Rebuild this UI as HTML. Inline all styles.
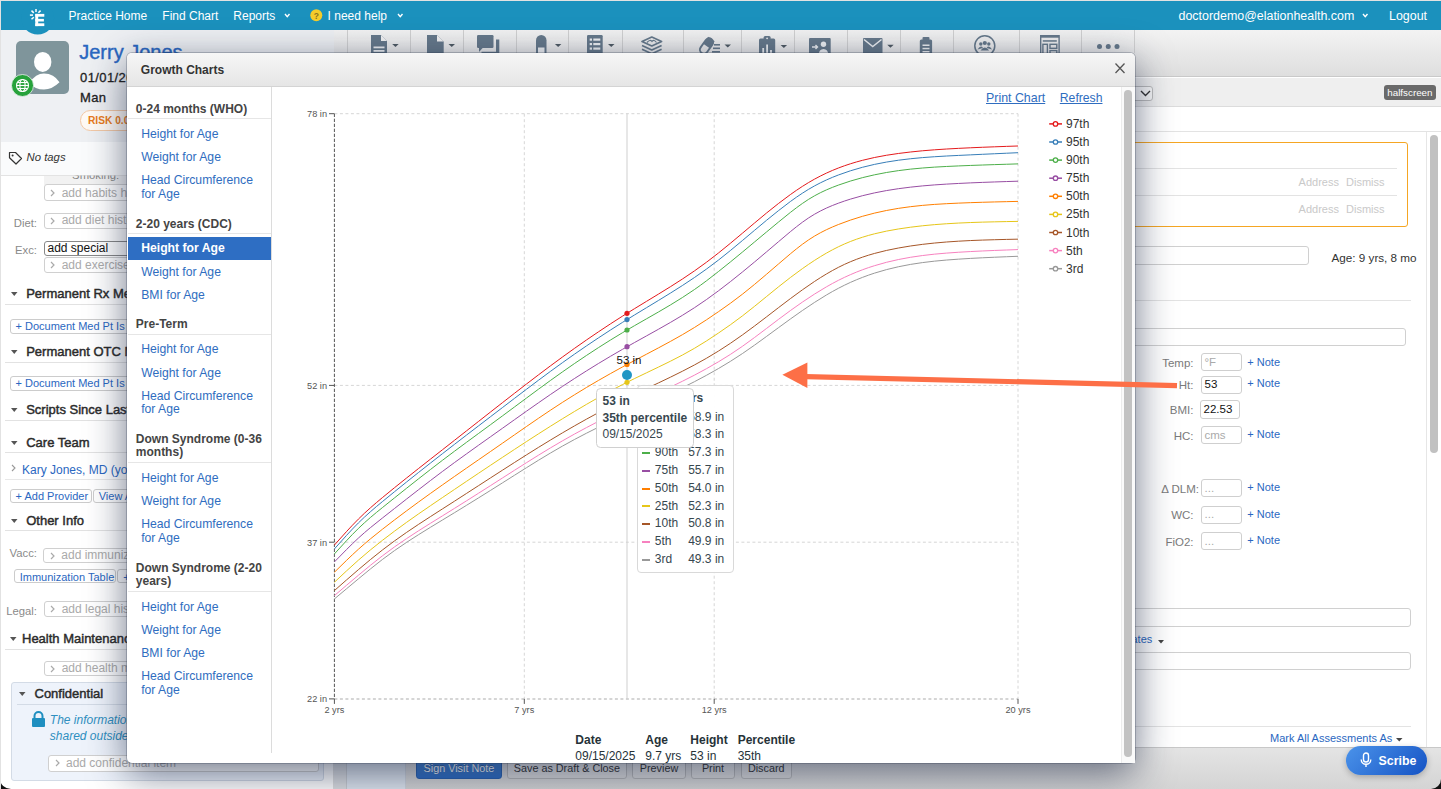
<!DOCTYPE html>
<html><head><meta charset="utf-8"><style>
*{margin:0;padding:0;box-sizing:border-box}
html,body{width:1441px;height:789px;overflow:hidden;background:#fff;font-family:"Liberation Sans",sans-serif}
.t{position:absolute;line-height:1;white-space:nowrap}
.r{position:absolute}
svg.r{overflow:visible}
</style></head><body>
<div class="r" style="left:0.0px;top:0.0px;width:1441.0px;height:30.0px;background:#1b91bd;"></div>
<div class="t " style="left:68.5px;top:10.1px;font-size:12px;color:#fff;">Practice Home</div>
<div class="t " style="left:162.3px;top:10.1px;font-size:12px;color:#fff;">Find Chart</div>
<div class="t " style="left:233.3px;top:10.1px;font-size:12px;color:#fff;">Reports</div>
<svg class="r" style="left:284px;top:13px" width="6.5" height="4.6"><polyline points="1,1 3.25,3.6 5.5,1" fill="none" stroke="#fff" stroke-width="1.4"/></svg>
<svg class="r" style="left:310px;top:9px" width="13" height="13"><circle cx="6.3" cy="6.3" r="6" fill="#f4cc2a"/><text x="6.3" y="9.8" text-anchor="middle" font-family="Liberation Sans" font-weight="bold" font-size="8.5" fill="#8a7420">?</text></svg>
<div class="t " style="left:327.6px;top:10.1px;font-size:12px;color:#fff;">I need help</div>
<svg class="r" style="left:397px;top:13px" width="6.5" height="4.6"><polyline points="1,1 3.25,3.6 5.5,1" fill="none" stroke="#fff" stroke-width="1.4"/></svg>
<div class="t " style="left:1178.5px;top:9.8px;font-size:12.45px;color:#fff;">doctordemo@elationhealth.com</div>
<svg class="r" style="left:1362px;top:13px" width="6.5" height="4.6"><polyline points="1,1 3.25,3.6 5.5,1" fill="none" stroke="#fff" stroke-width="1.4"/></svg>
<div class="t " style="left:1389.0px;top:9.8px;font-size:12.45px;color:#fff;">Logout</div>
<div class="r" style="left:0.0px;top:30.0px;width:347.0px;height:112.0px;background:#eef0f3;"></div>
<svg class="r" style="left:0px;top:0px" width="60" height="40"><circle cx="37.7" cy="18.1" r="16.4" fill="#1b91bd"/></svg>
<svg class="r" style="left:0;top:0" width="60" height="40">
<g fill="#fff"><rect x="35.3" y="13.9" width="2.9" height="12.2"/><rect x="35.3" y="13.9" width="9" height="2.8"/><rect x="35.3" y="18.9" width="8.6" height="2.6"/><rect x="35.3" y="23.3" width="9" height="2.8"/></g>
<g stroke="#fff" stroke-width="1.5" stroke-linecap="butt"><line x1="36" y1="9" x2="36" y2="12"/><line x1="38.4" y1="12.8" x2="40.6" y2="10.6"/><line x1="31.5" y1="10.6" x2="33.8" y2="12.9"/><line x1="29.9" y1="15.1" x2="33" y2="15.1"/><line x1="31.5" y1="19.3" x2="33.8" y2="17.2"/></g></svg>
<div class="r" style="left:16.0px;top:41.0px;width:53.0px;height:53.0px;background:#7f959b;border-radius:5px;overflow:hidden;"></div>
<svg class="r" style="left:16px;top:41px" width="53" height="53"><ellipse cx="26.7" cy="20.9" rx="8.7" ry="10" fill="#fff"/><path d="M13.3,42 Q20,32.5 28,32.6 Q38,32.7 43.5,41.3 Q36,48.6 28,48.6 Q19,48.6 13.3,42 Z" fill="#fff"/></svg>
<svg class="r" style="left:11px;top:74px" width="23" height="23"><circle cx="11.5" cy="11.5" r="11" fill="#27a23b" stroke="#eef0f3" stroke-width="0.8"/><g fill="none" stroke="#fff" stroke-width="1.1"><circle cx="11.5" cy="11.5" r="6"/><ellipse cx="11.5" cy="11.5" rx="2.6" ry="6"/><line x1="5.5" y1="11.5" x2="17.5" y2="11.5"/><line x1="6.3" y1="8.5" x2="16.7" y2="8.5"/><line x1="6.3" y1="14.5" x2="16.7" y2="14.5"/></g></svg>
<div class="t " style="left:79.2px;top:41.7px;font-size:20px;color:#2a67c1;-webkit-text-stroke:0.4px #2a67c1;">Jerry Jones</div>
<div class="t " style="left:80.0px;top:70.5px;font-size:13px;color:#222;-webkit-text-stroke:0.3px #222;letter-spacing:0.4px;">01/01/2016</div>
<div class="t " style="left:80.0px;top:90.8px;font-size:13px;color:#222;-webkit-text-stroke:0.3px #222;letter-spacing:0.4px;">Man</div>
<div class="r" style="left:80.0px;top:110.2px;width:120.0px;height:20.6px;border:1px solid #f3c9a6;border-radius:10.3px;background:#fffaf5;"></div>
<div class="t " style="left:88.0px;top:116.2px;font-size:10.2px;color:#e87a20;font-weight:bold;">RISK 0.08</div>
<div class="r" style="left:0.0px;top:142.0px;width:347.0px;height:34.0px;background:#fafbfc;border-bottom:1px solid #e3e3e3;"></div>
<svg class="r" style="left:8px;top:151px" width="15" height="15"><path d="M1.5,1.5 L7.5,1.5 L13.5,7.5 L8,13 L1.5,6.8 Z" fill="none" stroke="#333" stroke-width="1.2" stroke-linejoin="round"/><circle cx="4.6" cy="4.6" r="1" fill="#333"/></svg>
<div class="t " style="left:26.6px;top:152.4px;font-size:11.3px;color:#333;font-style:italic;">No tags</div>
<div class="r" style="left:44.0px;top:176.0px;width:290.0px;height:8.5px;background:#f2f2f2;"></div>
<div class="t " style="left:119.2px;transform:translateX(-100%);top:170.0px;font-size:11.3px;color:#888;clip-path:inset(5.6px 0 0 0);">Smoking:</div>
<div class="r" style="left:43.7px;top:184.4px;width:300.0px;height:16.4px;border:1px solid #d0d0d0;border-radius:3px;background:#fff;box-sizing:border-box;"></div>
<svg class="r" style="left:50.2px;top:188.6px" width="6" height="8"><polyline points="1,1 4,4 1,7" fill="none" stroke="#aaa" stroke-width="1.2"/></svg>
<div class="t " style="left:61.7px;top:187.0px;font-size:12px;color:#aaa;">add habits history</div>
<div class="t " style="left:37.0px;transform:translateX(-100%);top:217.9px;font-size:11.3px;color:#8a8a8a;">Diet:</div>
<div class="r" style="left:43.7px;top:212.7px;width:300.0px;height:16.2px;border:1px solid #d0d0d0;border-radius:3px;background:#fff;box-sizing:border-box;"></div>
<svg class="r" style="left:50.2px;top:216.79999999999998px" width="6" height="8"><polyline points="1,1 4,4 1,7" fill="none" stroke="#aaa" stroke-width="1.2"/></svg>
<div class="t " style="left:61.7px;top:214.4px;font-size:12px;color:#aaa;">add diet history</div>
<div class="t " style="left:37.0px;transform:translateX(-100%);top:244.9px;font-size:11.3px;color:#8a8a8a;">Exc:</div>
<div class="r" style="left:43.5px;top:240.6px;width:120.0px;height:15.0px;border:1px solid #888;border-radius:3px;background:#fff;"></div>
<div class="t " style="left:47.5px;top:241.8px;font-size:12px;color:#111;">add special</div>
<div class="r" style="left:43.7px;top:257.0px;width:300.0px;height:16.0px;border:1px solid #d0d0d0;border-radius:3px;background:#fff;box-sizing:border-box;"></div>
<svg class="r" style="left:50.2px;top:261.0px" width="6" height="8"><polyline points="1,1 4,4 1,7" fill="none" stroke="#aaa" stroke-width="1.2"/></svg>
<div class="t " style="left:61.7px;top:258.5px;font-size:12px;color:#aaa;">add exercise history</div>
<svg class="r" style="left:10.5px;top:292.2px" width="6.5" height="4"><polygon points="0,0 6.5,0 3.25,4" fill="#555"/></svg>
<div class="t " style="left:26.2px;top:287.2px;font-size:13px;color:#2b2b2b;-webkit-text-stroke:0.45px #2b2b2b;">Permanent Rx Meds</div>
<div class="r" style="left:5.0px;top:303.5px;width:328.0px;height:1.0px;background:#e2e2e2;"></div>
<div class="r" style="left:9.5px;top:318.7px;width:200.0px;height:15.0px;border:1px solid #ccc;border-radius:3px;background:#fff;"></div>
<div class="t " style="left:15.5px;top:321.0px;font-size:11px;color:#2a67c1;">+ Document Med Pt Is Taking</div>
<svg class="r" style="left:10.5px;top:350.4px" width="6.5" height="4"><polygon points="0,0 6.5,0 3.25,4" fill="#555"/></svg>
<div class="t " style="left:26.2px;top:345.4px;font-size:13px;color:#2b2b2b;-webkit-text-stroke:0.45px #2b2b2b;">Permanent OTC Meds</div>
<div class="r" style="left:5.0px;top:361.5px;width:328.0px;height:1.0px;background:#e2e2e2;"></div>
<div class="r" style="left:9.5px;top:375.8px;width:200.0px;height:15.0px;border:1px solid #ccc;border-radius:3px;background:#fff;"></div>
<div class="t " style="left:15.5px;top:378.1px;font-size:11px;color:#2a67c1;">+ Document Med Pt Is Taking</div>
<svg class="r" style="left:10.5px;top:407.8px" width="6.5" height="4"><polygon points="0,0 6.5,0 3.25,4" fill="#555"/></svg>
<div class="t " style="left:26.2px;top:402.8px;font-size:13px;color:#2b2b2b;-webkit-text-stroke:0.45px #2b2b2b;">Scripts Since Last Visit</div>
<div class="r" style="left:5.0px;top:419.5px;width:328.0px;height:1.0px;background:#e2e2e2;"></div>
<svg class="r" style="left:10.5px;top:440.6px" width="6.5" height="4"><polygon points="0,0 6.5,0 3.25,4" fill="#555"/></svg>
<div class="t " style="left:26.2px;top:435.6px;font-size:13px;color:#2b2b2b;-webkit-text-stroke:0.45px #2b2b2b;">Care Team</div>
<div class="r" style="left:5.0px;top:452.1px;width:328.0px;height:1.0px;background:#e2e2e2;"></div>
<svg class="r" style="left:11px;top:464px" width="6" height="8"><polyline points="1,1 4,4 1,7" fill="none" stroke="#999" stroke-width="1.1"/></svg>
<div class="t " style="left:22.0px;top:463.6px;font-size:12px;color:#2a67c1;">Kary Jones, MD (you)</div>
<div class="r" style="left:5.0px;top:478.6px;width:328.0px;height:1.0px;background:#e8e8e8;"></div>
<div class="r" style="left:9.6px;top:489.0px;width:82.0px;height:13.5px;border:1px solid #ccc;border-radius:3px;background:#fff;"></div>
<div class="t " style="left:15.6px;top:491.0px;font-size:11px;color:#2a67c1;">+ Add Provider</div>
<div class="r" style="left:92.7px;top:489.0px;width:80.0px;height:13.5px;border:1px solid #ccc;border-radius:3px;background:#fff;"></div>
<div class="t " style="left:98.7px;top:491.0px;font-size:11px;color:#2a67c1;">View All</div>
<svg class="r" style="left:10.5px;top:519px" width="6.5" height="4"><polygon points="0,0 6.5,0 3.25,4" fill="#555"/></svg>
<div class="t " style="left:26.2px;top:514.0px;font-size:13px;color:#2b2b2b;-webkit-text-stroke:0.45px #2b2b2b;">Other Info</div>
<div class="r" style="left:5.0px;top:530.4px;width:328.0px;height:1.0px;background:#e2e2e2;"></div>
<div class="t " style="left:37.0px;transform:translateX(-100%);top:547.9px;font-size:11.3px;color:#8a8a8a;">Vacc:</div>
<div class="r" style="left:43.3px;top:547.7px;width:280.0px;height:15.6px;border:1px solid #d0d0d0;border-radius:3px;background:#fff;box-sizing:border-box;"></div>
<svg class="r" style="left:49.8px;top:551.5px" width="6" height="8"><polyline points="1,1 4,4 1,7" fill="none" stroke="#aaa" stroke-width="1.2"/></svg>
<div class="t " style="left:61.3px;top:549.3px;font-size:12px;color:#aaa;">add immunization</div>
<div class="r" style="left:13.7px;top:569.4px;width:102.3px;height:14.0px;border:1px solid #ccc;border-radius:3px;background:#fff;"></div>
<div class="t " style="left:19.7px;top:571.5px;font-size:11px;color:#2a67c1;">Immunization Table</div>
<div class="r" style="left:117.2px;top:569.4px;width:60.0px;height:14.0px;border:1px solid #ccc;border-radius:3px;background:#fff;"></div>
<div class="t " style="left:123.2px;top:571.5px;font-size:11px;color:#2a67c1;">+ Add</div>
<div class="t " style="left:37.0px;transform:translateX(-100%);top:605.9px;font-size:11.3px;color:#8a8a8a;">Legal:</div>
<div class="r" style="left:43.7px;top:600.7px;width:280.0px;height:16.8px;border:1px solid #d0d0d0;border-radius:3px;background:#fff;box-sizing:border-box;"></div>
<svg class="r" style="left:50.2px;top:605.1px" width="6" height="8"><polyline points="1,1 4,4 1,7" fill="none" stroke="#aaa" stroke-width="1.2"/></svg>
<div class="t " style="left:61.7px;top:602.8px;font-size:12px;color:#aaa;">add legal history</div>
<svg class="r" style="left:9.8px;top:636.5px" width="6.5" height="4"><polygon points="0,0 6.5,0 3.25,4" fill="#555"/></svg>
<div class="t " style="left:22.0px;top:631.5px;font-size:13px;color:#2b2b2b;-webkit-text-stroke:0.45px #2b2b2b;">Health Maintenance</div>
<div class="r" style="left:5.0px;top:648.6px;width:328.0px;height:1.0px;background:#e2e2e2;"></div>
<div class="r" style="left:43.7px;top:660.8px;width:280.0px;height:15.6px;border:1px solid #d0d0d0;border-radius:3px;background:#fff;box-sizing:border-box;"></div>
<svg class="r" style="left:50.2px;top:664.5999999999999px" width="6" height="8"><polyline points="1,1 4,4 1,7" fill="none" stroke="#aaa" stroke-width="1.2"/></svg>
<div class="t " style="left:61.7px;top:662.4px;font-size:12px;color:#aaa;">add health maintenance</div>
<div class="r" style="left:10.7px;top:681.6px;width:313.0px;height:99.2px;background:#eef3fb;border:1px solid #d3dbe6;border-radius:3px;"></div>
<svg class="r" style="left:19px;top:692px" width="6.5" height="4"><polygon points="0,0 6.5,0 3.25,4" fill="#555"/></svg>
<div class="t " style="left:34.5px;top:686.5px;font-size:13px;color:#2b2b2b;-webkit-text-stroke:0.45px #2b2b2b;">Confidential</div>
<div class="r" style="left:17.0px;top:703.6px;width:300.0px;height:1.0px;background:#d3dbe6;"></div>
<svg class="r" style="left:31px;top:711px" width="15" height="17"><path d="M3.5,7 V5 A4,4 0 0 1 11.5,5 V7" fill="none" stroke="#1f8fc0" stroke-width="2"/><rect x="1" y="7" width="13" height="9" rx="1" fill="#1f8fc0"/></svg>
<div class="t " style="left:49.8px;top:714.2px;font-size:12px;color:#2f8fc0;font-style:italic;">The information in this section will not be</div>
<div class="t " style="left:49.8px;top:730.0px;font-size:12px;color:#2f8fc0;font-style:italic;">shared outside of this practice</div>
<div class="r" style="left:48.2px;top:754.9px;width:270.8px;height:16.8px;border:1px solid #d0d0d0;border-radius:3px;background:#fff;box-sizing:border-box;"></div>
<svg class="r" style="left:54.7px;top:759.3px" width="6" height="8"><polyline points="1,1 4,4 1,7" fill="none" stroke="#aaa" stroke-width="1.2"/></svg>
<div class="t " style="left:66.0px;top:757.0px;font-size:12px;color:#aaa;">add confidential item</div>
<div class="r" style="left:333.0px;top:142.0px;width:1.0px;height:647.0px;background:#dedede;"></div>
<div class="r" style="left:334.0px;top:30.0px;width:1107.0px;height:47.0px;background:linear-gradient(#f3f3f3,#dedede);border-bottom:1px solid #c9c9c9;"></div>
<div class="r" style="left:347.0px;top:30.0px;width:1.0px;height:23.0px;background:#d0d0d0;"></div>
<div class="r" style="left:409.5px;top:30.0px;width:1.0px;height:23.0px;background:#d0d0d0;"></div>
<div class="r" style="left:462.6px;top:30.0px;width:1.0px;height:23.0px;background:#d0d0d0;"></div>
<div class="r" style="left:515.5px;top:30.0px;width:1.0px;height:23.0px;background:#d0d0d0;"></div>
<div class="r" style="left:568.4px;top:30.0px;width:1.0px;height:23.0px;background:#d0d0d0;"></div>
<div class="r" style="left:621.8px;top:30.0px;width:1.0px;height:23.0px;background:#d0d0d0;"></div>
<div class="r" style="left:682.8px;top:30.0px;width:1.0px;height:23.0px;background:#d0d0d0;"></div>
<div class="r" style="left:740.5px;top:30.0px;width:1.0px;height:23.0px;background:#d0d0d0;"></div>
<div class="r" style="left:793.6px;top:30.0px;width:1.0px;height:23.0px;background:#d0d0d0;"></div>
<div class="r" style="left:846.5px;top:30.0px;width:1.0px;height:23.0px;background:#d0d0d0;"></div>
<div class="r" style="left:899.5px;top:30.0px;width:1.0px;height:23.0px;background:#d0d0d0;"></div>
<div class="r" style="left:952.7px;top:30.0px;width:1.0px;height:23.0px;background:#d0d0d0;"></div>
<div class="r" style="left:1018.6px;top:30.0px;width:1.0px;height:23.0px;background:#d0d0d0;"></div>
<div class="r" style="left:1081.2px;top:30.0px;width:1.0px;height:23.0px;background:#d0d0d0;"></div>
<div class="r" style="left:1134.4px;top:30.0px;width:1.0px;height:23.0px;background:#d0d0d0;"></div>
<svg class="r" style="left:370.6px;top:35.4px" width="30" height="20"><path d="M0,0 H10 L16,6 V20 H0 Z" fill="#66798a"/><path d="M10,0 V6 H16" fill="#f4f4f4"/><rect x="2.5" y="11.5" width="11" height="1.8" fill="#eef0f2"/><rect x="2.5" y="15" width="11" height="1.8" fill="#eef0f2"/><polygon points="21.2,9 27.7,9 24.45,12" fill="#4f5a63"/></svg>
<svg class="r" style="left:426.8px;top:35.4px" width="30" height="20"><path d="M0,0 H10 L16.7,6.5 V20 H0 Z" fill="#66798a"/><path d="M10,0 V6.5 H16.7" fill="#f4f4f4"/><polygon points="21.5,9 28.0,9 24.75,12" fill="#4f5a63"/></svg>
<svg class="r" style="left:477.4px;top:35.4px" width="24" height="20"><rect x="0" y="0" width="16.5" height="13" rx="1.2" fill="#66798a"/><path d="M2,12 L2,17 L6.5,12Z" fill="#66798a"/><path d="M19,4.5 H22.3 V20 H4.5 V16.8 H19 Z" fill="#66798a"/></svg>
<svg class="r" style="left:536px;top:35.4px" width="30" height="20"><path d="M0,20 V5.2 A5.25,5.25 0 0 1 10.5,5.2 V20 Z" fill="#66798a"/><rect x="2" y="12.5" width="6.5" height="8" fill="#eef0f2"/><polygon points="18.9,9 25.4,9 22.15,12" fill="#4f5a63"/></svg>
<svg class="r" style="left:587px;top:35.4px" width="30" height="20"><rect x="0" y="0" width="15.7" height="20" rx="1.2" fill="#66798a"/><g fill="#eef0f2"><rect x="2.7" y="3.5" width="2.3" height="2.2"/><rect x="6.3" y="3.5" width="7" height="2.2"/><rect x="2.7" y="8" width="2.3" height="2.2"/><rect x="6.3" y="8" width="7" height="2.2"/><rect x="2.7" y="12.5" width="2.3" height="2.2"/><rect x="6.3" y="12.5" width="7" height="2.2"/></g><polygon points="21,9 27.5,9 24.25,12" fill="#4f5a63"/></svg>
<svg class="r" style="left:640.8px;top:36.1px" width="24" height="20"><g fill="none" stroke="#66798a" stroke-width="1.7" stroke-linejoin="round"><path d="M1,5.5 L10.8,1 L20.6,5.5 L10.8,10 Z"/><path d="M1,9.5 L10.8,14 L20.6,9.5"/><path d="M1,13.3 L10.8,17.8 L20.6,13.3"/></g><path d="M6,6.5 Q9,3 11,5.5 Q13,3 15.5,6.5" fill="none" stroke="#66798a" stroke-width="1.2"/></svg>
<svg class="r" style="left:701.2px;top:37px" width="34" height="20"><g transform="rotate(-55 5.5 9)"><rect x="-3" y="5" width="17" height="8" rx="4" fill="none" stroke="#66798a" stroke-width="1.9"/><rect x="5.5" y="5" width="8.5" height="8" rx="0" fill="#66798a"/></g><rect x="13" y="7" width="6" height="1.6" fill="#66798a"/><rect x="12" y="10.5" width="7" height="1.6" fill="#66798a"/><rect x="11" y="14" width="8" height="1.6" fill="#66798a"/><polygon points="23.5,7.6 30.0,7.6 26.75,10.6" fill="#4f5a63"/></svg>
<svg class="r" style="left:758.6px;top:35.6px" width="30" height="20"><rect x="0" y="2.5" width="16.2" height="17.5" rx="1.5" fill="#66798a"/><rect x="4.6" y="0" width="7" height="4.5" rx="1.5" fill="#66798a"/><circle cx="8.1" cy="2.3" r="0.9" fill="#eef0f2"/><rect x="3.3" y="12" width="1.8" height="8" fill="#eef0f2"/><rect x="7.2" y="8.5" width="1.8" height="11.5" fill="#eef0f2"/><rect x="11.1" y="14" width="1.8" height="6" fill="#eef0f2"/><polygon points="21.6,9 28.1,9 24.85,12" fill="#4f5a63"/></svg>
<svg class="r" style="left:809.1px;top:37.9px" width="26" height="20"><rect x="0" y="0" width="21.7" height="17" rx="1" fill="#66798a"/><path d="M3,9 H8.5 M6.5,7 L8.5,9 L6.5,11" stroke="#eef0f2" stroke-width="1.4" fill="none"/><circle cx="14.5" cy="6.3" r="2.7" fill="#eef0f2"/><path d="M9.5,17 Q10,11 14.5,11 Q19,11 19.5,17 Z" fill="#eef0f2"/></svg>
<svg class="r" style="left:862.7px;top:37.9px" width="34" height="20"><rect x="0" y="0" width="19.5" height="17" rx="1" fill="#66798a"/><path d="M1,1.5 L9.75,8.5 L18.5,1.5" stroke="#eef0f2" stroke-width="1.5" fill="none"/><polygon points="24.2,6.7 30.7,6.7 27.45,9.7" fill="#4f5a63"/></svg>
<svg class="r" style="left:919.3px;top:36.7px" width="16" height="20"><rect x="0.8" y="2.5" width="12.3" height="17" rx="1.5" fill="#66798a"/><rect x="3.5" y="0" width="7" height="3.5" rx="1" fill="#66798a"/><g fill="#eef0f2"><rect x="3.5" y="7.5" width="7" height="1.5"/><rect x="3.5" y="10.8" width="7" height="1.5"/><rect x="3.5" y="14" width="7" height="1.5"/></g></svg>
<svg class="r" style="left:974.2px;top:35.2px" width="24" height="20"><circle cx="10.8" cy="10.8" r="10" fill="none" stroke="#66798a" stroke-width="1.5"/><g fill="#66798a"><circle cx="10.8" cy="8" r="2.1"/><circle cx="6.8" cy="9" r="1.7"/><circle cx="14.8" cy="9" r="1.7"/><path d="M6.5,15.5 Q10.8,9.5 15.1,15.5 Z"/><path d="M3.5,14.5 Q6.8,9.5 9,13 Z"/><path d="M18.1,14.5 Q14.8,9.5 12.6,13 Z"/></g></svg>
<svg class="r" style="left:1039.7px;top:35.2px" width="24" height="20"><rect x="0.7" y="0.7" width="18.4" height="19" fill="none" stroke="#66798a" stroke-width="1.4"/><rect x="0.7" y="0.7" width="18.4" height="2" fill="#66798a"/><rect x="2.8" y="5.2" width="14" height="1.5" fill="#66798a"/><rect x="2.9" y="9.3" width="4.5" height="11" fill="none" stroke="#66798a" stroke-width="1.4"/><rect x="10" y="9.3" width="6.8" height="4" fill="none" stroke="#66798a" stroke-width="1.4"/><rect x="10" y="15.6" width="6.8" height="5" fill="none" stroke="#66798a" stroke-width="1.4"/></svg>
<svg class="r" style="left:1096.5px;top:43.5px" width="24" height="6"><circle cx="2.5" cy="2.5" r="2.5" fill="#66798a"/><circle cx="11.25" cy="2.5" r="2.5" fill="#66798a"/><circle cx="20" cy="2.5" r="2.5" fill="#66798a"/></svg>
<div class="r" style="left:334.0px;top:78.0px;width:1107.0px;height:29.0px;background:#efefef;border-bottom:1px solid #dcdcdc;"></div>
<div class="r" style="left:1100.0px;top:86.2px;width:53.4px;height:14.4px;border:1px solid #bdbdbd;border-radius:3px;background:#fafafa;"></div>
<svg class="r" style="left:1140px;top:89.5px" width="11" height="6.5"><polyline points="1,1 5.5,5.5 10,1" fill="none" stroke="#333" stroke-width="1.4"/></svg>
<div class="r" style="left:1384.0px;top:85.0px;width:52.3px;height:15.0px;background:#6a6a6a;border-radius:3px;"></div>
<div class="t " style="left:1387.3px;top:88.0px;font-size:9.8px;color:#fff;">halfscreen</div>
<div class="r" style="left:406.0px;top:107.0px;width:1035.0px;height:640.0px;background:#fff;"></div>
<div class="r" style="left:406.0px;top:131.3px;width:1035.0px;height:1.0px;background:#e3e3e3;"></div>
<div class="r" style="left:1426.0px;top:132.0px;width:1.0px;height:615.0px;background:#e6e6e6;"></div>
<div class="r" style="left:1430.0px;top:135.0px;width:8.0px;height:318.0px;background:#c1c1c1;border-radius:4px;"></div>
<div class="r" style="left:900.0px;top:141.8px;width:507.6px;height:85.0px;border:1.5px solid #f5a623;border-radius:3px;"></div>
<div class="r" style="left:910.0px;top:168.2px;width:487.0px;height:1.0px;background:#e3e3e3;"></div>
<div class="r" style="left:910.0px;top:195.4px;width:487.0px;height:1.0px;background:#e3e3e3;"></div>
<div class="t " style="left:1298.6px;top:176.9px;font-size:11px;color:#c9c9c9;">Address</div>
<div class="t " style="left:1346.0px;top:176.9px;font-size:11px;color:#c9c9c9;">Dismiss</div>
<div class="t " style="left:1298.6px;top:203.5px;font-size:11px;color:#c9c9c9;">Address</div>
<div class="t " style="left:1346.0px;top:203.5px;font-size:11px;color:#c9c9c9;">Dismiss</div>
<div class="r" style="left:900.0px;top:246.3px;width:408.7px;height:19.2px;border:1px solid #d0d0d0;border-radius:3px;"></div>
<div class="t " style="left:1331.5px;top:251.8px;font-size:11.7px;color:#333;">Age: 9 yrs, 8 mo</div>
<div class="r" style="left:900.0px;top:300.0px;width:511.0px;height:1.0px;background:#e3e3e3;"></div>
<div class="r" style="left:900.0px;top:328.3px;width:506.4px;height:18.1px;border:1px solid #d0d0d0;border-radius:3px;"></div>
<div class="t " style="left:1193.5px;transform:translateX(-100%);top:358.3px;font-size:11.5px;color:#7a7a7a;">Temp:</div>
<div class="r" style="left:1201.0px;top:353.3px;width:40.5px;height:18.1px;border:1px solid #cfcfcf;border-radius:3px;background:#fff;"></div>
<div class="t " style="left:1204.5px;top:357.3px;font-size:11.5px;color:#aaa;">°F</div>
<div class="t " style="left:1247.3px;top:356.7px;font-size:11px;color:#2a67c1;">+ Note</div>
<div class="t " style="left:1193.5px;transform:translateX(-100%);top:379.5px;font-size:11.5px;color:#7a7a7a;">Ht:</div>
<div class="r" style="left:1201.0px;top:375.5px;width:40.5px;height:18.1px;border:1px solid #cfcfcf;border-radius:3px;background:#fff;"></div>
<div class="t " style="left:1204.5px;top:378.5px;font-size:11.5px;color:#111;">53</div>
<div class="t " style="left:1247.3px;top:377.9px;font-size:11px;color:#2a67c1;">+ Note</div>
<div class="t " style="left:1193.5px;transform:translateX(-100%);top:404.5px;font-size:11.5px;color:#7a7a7a;">BMI:</div>
<div class="r" style="left:1200.0px;top:400.0px;width:39.5px;height:19.3px;border:1px solid #cfcfcf;border-radius:3px;background:#fff;"></div>
<div class="t " style="left:1203.5px;top:403.5px;font-size:11.5px;color:#111;">22.53</div>
<div class="t " style="left:1193.5px;transform:translateX(-100%);top:430.8px;font-size:11.5px;color:#7a7a7a;">HC:</div>
<div class="r" style="left:1201.0px;top:426.0px;width:40.5px;height:18.1px;border:1px solid #cfcfcf;border-radius:3px;background:#fff;"></div>
<div class="t " style="left:1204.5px;top:429.8px;font-size:11.5px;color:#aaa;">cms</div>
<div class="t " style="left:1247.3px;top:429.2px;font-size:11px;color:#2a67c1;">+ Note</div>
<div class="t " style="left:1199.0px;transform:translateX(-100%);top:483.9px;font-size:11.5px;color:#7a7a7a;">&Delta; DLM:</div>
<div class="r" style="left:1201.0px;top:478.8px;width:40.5px;height:18.1px;border:1px solid #cfcfcf;border-radius:3px;background:#fff;"></div>
<div class="t " style="left:1204.5px;top:482.9px;font-size:11.5px;color:#aaa;">...</div>
<div class="t " style="left:1247.3px;top:482.3px;font-size:11px;color:#2a67c1;">+ Note</div>
<div class="t " style="left:1193.5px;transform:translateX(-100%);top:510.2px;font-size:11.5px;color:#7a7a7a;">WC:</div>
<div class="r" style="left:1201.0px;top:505.9px;width:40.5px;height:18.1px;border:1px solid #cfcfcf;border-radius:3px;background:#fff;"></div>
<div class="t " style="left:1204.5px;top:509.2px;font-size:11.5px;color:#aaa;">...</div>
<div class="t " style="left:1247.3px;top:508.6px;font-size:11px;color:#2a67c1;">+ Note</div>
<div class="t " style="left:1193.5px;transform:translateX(-100%);top:536.9px;font-size:11.5px;color:#7a7a7a;">FiO2:</div>
<div class="r" style="left:1201.0px;top:532.2px;width:40.5px;height:18.1px;border:1px solid #cfcfcf;border-radius:3px;background:#fff;"></div>
<div class="t " style="left:1204.5px;top:535.9px;font-size:11.5px;color:#aaa;">...</div>
<div class="t " style="left:1247.3px;top:535.3px;font-size:11px;color:#2a67c1;">+ Note</div>
<div class="r" style="left:900.0px;top:608.4px;width:511.4px;height:18.9px;border:1px solid #d0d0d0;border-radius:3px;"></div>
<div class="t " style="left:1152.3px;transform:translateX(-100%);top:634.2px;font-size:11px;color:#2a67c1;">Templates</div>
<svg class="r" style="left:1157.6px;top:639.5px" width="6" height="3.5"><polygon points="0,0 6,0 3.0,3.5" fill="#444"/></svg>
<div class="r" style="left:900.0px;top:652.3px;width:511.4px;height:17.9px;border:1px solid #d0d0d0;border-radius:3px;"></div>
<div class="r" style="left:900.0px;top:726.0px;width:511.0px;height:1.0px;background:#e3e3e3;"></div>
<div class="t " style="left:1270.0px;top:732.9px;font-size:11px;color:#2a67c1;">Mark All Assessments As</div>
<svg class="r" style="left:1396.3px;top:738px" width="6.5" height="3.5"><polygon points="0,0 6.5,0 3.25,3.5" fill="#444"/></svg>
<div class="r" style="left:334.0px;top:600.0px;width:13.0px;height:189.0px;background:#dcdee1;border-right:1px solid #c9ccd0;"></div>
<div class="r" style="left:347.0px;top:600.0px;width:59.0px;height:189.0px;background:#dfe6ef;border-right:1px solid #cfd5dd;"></div>
<div class="r" style="left:406.0px;top:747.0px;width:1035.0px;height:42.0px;background:linear-gradient(#e4e4e4,#d4d4d4);border-top:1px solid #c8c8c8;"></div>
<div class="r" style="left:416.0px;top:757.0px;width:85.5px;height:22.2px;background:linear-gradient(#4a8ad8,#2d6cc4);border-radius:3px;border:1px solid #2a62b0;"></div>
<div class="t " style="left:458.9px;transform:translateX(-50%);top:762.6px;font-size:10.8px;color:#fff;text-shadow:0 -1px 0 rgba(0,0,0,0.3);">Sign Visit Note</div>
<div class="r" style="left:506.7px;top:757.0px;width:120.3px;height:22.2px;background:linear-gradient(#f2f2f2,#dcdcdc);border-radius:3px;border:1px solid #b9b9b9;"></div>
<div class="t " style="left:566.9px;transform:translateX(-50%);top:762.6px;font-size:10.8px;color:#333;">Save as Draft &amp; Close</div>
<div class="r" style="left:632.0px;top:757.0px;width:54.0px;height:22.2px;background:linear-gradient(#f2f2f2,#dcdcdc);border-radius:3px;border:1px solid #b9b9b9;"></div>
<div class="t " style="left:659.0px;transform:translateX(-50%);top:762.6px;font-size:10.8px;color:#333;">Preview</div>
<div class="r" style="left:691.0px;top:757.0px;width:44.0px;height:22.2px;background:linear-gradient(#f2f2f2,#dcdcdc);border-radius:3px;border:1px solid #b9b9b9;"></div>
<div class="t " style="left:713.0px;transform:translateX(-50%);top:762.6px;font-size:10.8px;color:#333;">Print</div>
<div class="r" style="left:740.5px;top:757.0px;width:51.5px;height:22.2px;background:linear-gradient(#f2f2f2,#dcdcdc);border-radius:3px;border:1px solid #b9b9b9;"></div>
<div class="t " style="left:766.2px;transform:translateX(-50%);top:762.6px;font-size:10.8px;color:#333;">Discard</div>
<div class="r" style="left:1345.8px;top:745.8px;width:81.0px;height:29.0px;background:linear-gradient(135deg,#4b93ea,#1553c4);border-radius:15px;box-shadow:0 2px 6px rgba(0,0,0,0.25);"></div>
<svg class="r" style="left:1360px;top:752px" width="12" height="16"><rect x="3.5" y="1" width="5" height="9" rx="2.5" fill="none" stroke="#fff" stroke-width="1.4"/><path d="M1.2,7.5 A4.8,4.8 0 0 0 10.8,7.5" fill="none" stroke="#fff" stroke-width="1.4"/><line x1="6" y1="12.5" x2="6" y2="15" stroke="#fff" stroke-width="1.4"/></svg>
<div class="t " style="left:1378.5px;top:754.8px;font-size:12.4px;color:#fff;font-weight:bold;">Scribe</div>
<svg class="r" style="left:0;top:779px" width="11" height="10"><path d="M0,0 A11,10 0 0 0 11,10 L0,10 Z" fill="#111"/></svg>
<svg class="r" style="left:1431px;top:779px" width="10" height="10"><path d="M10,0 A10,10 0 0 1 0,10 L10,10 Z" fill="#111"/></svg>
<div class="r" style="left:127.0px;top:53.0px;width:1008.0px;height:710.0px;background:#fff;border-radius:5px;box-shadow:0 10px 38px rgba(20,30,60,0.62),0 0 0 1px rgba(40,50,70,0.25);overflow:hidden;"></div>
<div class="r" style="left:127.0px;top:53.0px;width:1008.0px;height:34.0px;background:linear-gradient(#f6f6f6,#e6e6e6);border-bottom:1px solid #d4d4d4;border-radius:5px 5px 0 0;"></div>
<div class="t " style="left:140.8px;top:63.9px;font-size:12px;color:#333;font-weight:bold;">Growth Charts</div>
<svg class="r" style="left:1115px;top:63.3px" width="10" height="10.5"><path d="M0.5,0.5 L9.5,10 M9.5,0.5 L0.5,10" stroke="#555" stroke-width="1.3"/></svg>
<div class="r" style="left:271.0px;top:87.0px;width:1.0px;height:666.0px;background:#dcdcdc;"></div>
<div class="t " style="left:135.8px;top:102.8px;font-size:12px;color:#444;font-weight:bold;">0-24 months (WHO)</div>
<div class="r" style="left:128.0px;top:118.3px;width:142.5px;height:1.0px;background:#e6e6e6;"></div>
<div class="t " style="left:135.8px;top:217.8px;font-size:12px;color:#444;font-weight:bold;">2-20 years (CDC)</div>
<div class="r" style="left:128.0px;top:232.5px;width:142.5px;height:1.0px;background:#e6e6e6;"></div>
<div class="t " style="left:135.8px;top:318.2px;font-size:12px;color:#444;font-weight:bold;">Pre-Term</div>
<div class="r" style="left:128.0px;top:333.5px;width:142.5px;height:1.0px;background:#e6e6e6;"></div>
<div class="t " style="left:135.8px;top:432.8px;font-size:12px;color:#444;font-weight:bold;">Down Syndrome (0-36</div>
<div class="t " style="left:135.8px;top:446.1px;font-size:12px;color:#444;font-weight:bold;">months)</div>
<div class="r" style="left:128.0px;top:462.1px;width:142.5px;height:1.0px;background:#e6e6e6;"></div>
<div class="t " style="left:135.8px;top:561.5px;font-size:12px;color:#444;font-weight:bold;">Down Syndrome (2-20</div>
<div class="t " style="left:135.8px;top:574.8px;font-size:12px;color:#444;font-weight:bold;">years)</div>
<div class="r" style="left:128.0px;top:590.8px;width:142.5px;height:1.0px;background:#e6e6e6;"></div>
<div class="t " style="left:141.2px;top:128.0px;font-size:12.2px;color:#2f6dc0;">Height for Age</div>
<div class="t " style="left:141.2px;top:151.0px;font-size:12.2px;color:#2f6dc0;">Weight for Age</div>
<div class="t " style="left:141.2px;top:173.9px;font-size:12.2px;color:#2f6dc0;">Head Circumference</div>
<div class="t " style="left:141.2px;top:187.6px;font-size:12.2px;color:#2f6dc0;">for Age</div>
<div class="t " style="left:141.2px;top:265.7px;font-size:12.2px;color:#2f6dc0;">Weight for Age</div>
<div class="t " style="left:141.2px;top:288.9px;font-size:12.2px;color:#2f6dc0;">BMI for Age</div>
<div class="t " style="left:141.2px;top:343.1px;font-size:12.2px;color:#2f6dc0;">Height for Age</div>
<div class="t " style="left:141.2px;top:366.6px;font-size:12.2px;color:#2f6dc0;">Weight for Age</div>
<div class="t " style="left:141.2px;top:389.7px;font-size:12.2px;color:#2f6dc0;">Head Circumference</div>
<div class="t " style="left:141.2px;top:403.3px;font-size:12.2px;color:#2f6dc0;">for Age</div>
<div class="t " style="left:141.2px;top:471.7px;font-size:12.2px;color:#2f6dc0;">Height for Age</div>
<div class="t " style="left:141.2px;top:494.5px;font-size:12.2px;color:#2f6dc0;">Weight for Age</div>
<div class="t " style="left:141.2px;top:517.7px;font-size:12.2px;color:#2f6dc0;">Head Circumference</div>
<div class="t " style="left:141.2px;top:532.0px;font-size:12.2px;color:#2f6dc0;">for Age</div>
<div class="t " style="left:141.2px;top:600.5px;font-size:12.2px;color:#2f6dc0;">Height for Age</div>
<div class="t " style="left:141.2px;top:624.0px;font-size:12.2px;color:#2f6dc0;">Weight for Age</div>
<div class="t " style="left:141.2px;top:646.9px;font-size:12.2px;color:#2f6dc0;">BMI for Age</div>
<div class="t " style="left:141.2px;top:670.4px;font-size:12.2px;color:#2f6dc0;">Head Circumference</div>
<div class="t " style="left:141.2px;top:684.1px;font-size:12.2px;color:#2f6dc0;">for Age</div>
<div class="r" style="left:127.5px;top:236.6px;width:143.0px;height:23.3px;background:#2e6ec3;"></div>
<div class="t " style="left:141.2px;top:242.4px;font-size:12.2px;color:#fff;font-weight:bold;">Height for Age</div>
<div class="r" style="left:1120.6px;top:87.0px;width:14.4px;height:676.0px;background:#fafafa;border-left:1px solid #ececec;"></div>
<div class="r" style="left:1124.2px;top:89.9px;width:7.5px;height:667.0px;background:#c2c2c2;border-radius:4px;"></div>
<div class="t " style="left:986.0px;top:92.1px;font-size:12.4px;color:#2f6dc0;text-decoration:underline;">Print Chart</div>
<div class="t " style="left:1059.8px;top:92.3px;font-size:12.2px;color:#2f6dc0;text-decoration:underline;">Refresh</div>
<svg class="r" style="left:0;top:0" width="1441" height="789" viewBox="0 0 1441 789">
<line x1="334.4" y1="113.7" x2="1018" y2="113.7" stroke="#d6d6d6" stroke-dasharray="3,2.5"/>
<line x1="334.4" y1="385.4" x2="1018" y2="385.4" stroke="#d6d6d6" stroke-dasharray="3,2.5"/>
<line x1="334.4" y1="542.2" x2="1018" y2="542.2" stroke="#d6d6d6" stroke-dasharray="3,2.5"/>
<line x1="524.3" y1="113.7" x2="524.3" y2="698.9" stroke="#d6d6d6" stroke-dasharray="3,2.5"/>
<line x1="714.2" y1="113.7" x2="714.2" y2="698.9" stroke="#d6d6d6" stroke-dasharray="3,2.5"/>
<line x1="1018" y1="113.7" x2="1018" y2="698.9" stroke="#d6d6d6" stroke-dasharray="3,2.5"/>
<line x1="334.4" y1="698.9" x2="1018" y2="698.9" stroke="#c8c8c8" stroke-width="1.5" stroke-dasharray="3,2.5"/>
<line x1="334.4" y1="113.7" x2="334.4" y2="698.9" stroke="#555" stroke-dasharray="3.3,1.7"/>
<line x1="329" y1="113.7" x2="334.4" y2="113.7" stroke="#555"/>
<text x="327" y="117.2" text-anchor="end" font-family="Liberation Sans" font-size="9.2" fill="#555">78 in</text>
<line x1="329" y1="385.4" x2="334.4" y2="385.4" stroke="#555"/>
<text x="327" y="388.9" text-anchor="end" font-family="Liberation Sans" font-size="9.2" fill="#555">52 in</text>
<line x1="329" y1="542.2" x2="334.4" y2="542.2" stroke="#555"/>
<text x="327" y="545.7" text-anchor="end" font-family="Liberation Sans" font-size="9.2" fill="#555">37 in</text>
<line x1="329" y1="698.9" x2="334.4" y2="698.9" stroke="#555"/>
<text x="327" y="702.4" text-anchor="end" font-family="Liberation Sans" font-size="9.2" fill="#555">22 in</text>
<line x1="334.4" y1="698.9" x2="334.4" y2="703.9" stroke="#555"/>
<text x="334.4" y="712.8" text-anchor="middle" font-family="Liberation Sans" font-size="9.2" fill="#555">2 yrs</text>
<line x1="524.3" y1="698.9" x2="524.3" y2="703.9" stroke="#555"/>
<text x="524.3" y="712.8" text-anchor="middle" font-family="Liberation Sans" font-size="9.2" fill="#555">7 yrs</text>
<line x1="714.2" y1="698.9" x2="714.2" y2="703.9" stroke="#555"/>
<text x="714.2" y="712.8" text-anchor="middle" font-family="Liberation Sans" font-size="9.2" fill="#555">12 yrs</text>
<line x1="1018" y1="698.9" x2="1018" y2="703.9" stroke="#555"/>
<text x="1018" y="712.8" text-anchor="middle" font-family="Liberation Sans" font-size="9.2" fill="#555">20 yrs</text>
<line x1="627" y1="113.7" x2="627" y2="698.9" stroke="#cfcfcf"/>
<path d="M334.40,545.07 C338.40,540.57 342.40,536.07 346.40,531.70 C350.40,527.32 354.40,523.08 358.40,519.08 C362.40,515.09 366.40,511.37 370.40,507.83 C374.40,504.29 378.40,500.92 382.40,497.61 C386.40,494.30 390.40,491.03 394.40,487.79 C398.40,484.55 402.40,481.34 406.40,478.15 C410.40,474.96 414.40,471.79 418.40,468.64 C422.40,465.48 426.40,462.34 430.40,459.20 C434.40,456.06 438.40,452.93 442.40,449.80 C446.40,446.66 450.40,443.52 454.40,440.38 C458.40,437.24 462.40,434.10 466.40,430.95 C470.40,427.81 474.40,424.67 478.40,421.52 C482.40,418.38 486.40,415.24 490.40,412.10 C494.40,408.97 498.40,405.83 502.40,402.71 C506.40,399.58 510.40,396.46 514.40,393.36 C518.40,390.25 522.40,387.16 526.40,384.08 C530.40,381.01 534.40,377.95 538.40,374.92 C542.40,371.89 546.40,368.88 550.40,365.90 C554.40,362.93 558.40,359.98 562.40,357.07 C566.40,354.16 570.40,351.28 574.40,348.45 C578.40,345.61 582.40,342.81 586.40,340.04 C590.40,337.28 594.40,334.55 598.40,331.86 C602.40,329.18 606.40,326.53 610.40,323.92 C614.40,321.31 618.40,318.74 622.40,316.21 C626.40,313.68 630.40,311.20 634.40,308.74 C638.40,306.29 642.40,303.86 646.40,301.43 C650.40,299.01 654.40,296.59 658.40,294.14 C662.40,291.70 666.40,289.24 670.40,286.73 C674.40,284.22 678.40,281.66 682.40,279.04 C686.40,276.42 690.40,273.73 694.40,270.95 C698.40,268.16 702.40,265.29 706.40,262.30 C710.40,259.32 714.40,256.23 718.40,253.05 C722.40,249.87 726.40,246.61 730.40,243.29 C734.40,239.98 738.40,236.61 742.40,233.24 C746.40,229.86 750.40,226.48 754.40,223.11 C758.40,219.75 762.40,216.42 766.40,213.14 C770.40,209.87 774.40,206.66 778.40,203.55 C782.40,200.45 786.40,197.44 790.40,194.57 C794.40,191.69 798.40,188.96 802.40,186.39 C806.40,183.82 810.40,181.42 814.40,179.21 C818.40,177.00 822.40,174.98 826.40,173.12 C830.40,171.26 834.40,169.56 838.40,168.01 C842.40,166.46 846.40,165.06 850.40,163.79 C854.40,162.51 858.40,161.37 862.40,160.33 C866.40,159.29 870.40,158.37 874.40,157.53 C878.40,156.70 882.40,155.95 886.40,155.28 C890.40,154.61 894.40,154.01 898.40,153.47 C902.40,152.93 906.40,152.44 910.40,152.00 C914.40,151.55 918.40,151.15 922.40,150.79 C926.40,150.43 930.40,150.11 934.40,149.82 C938.40,149.53 942.40,149.26 946.40,149.02 C950.40,148.78 954.40,148.56 958.40,148.36 C962.40,148.16 966.40,147.97 970.40,147.79 C974.40,147.61 978.40,147.44 982.40,147.28 C986.40,147.12 990.40,146.96 994.40,146.82 C998.40,146.67 1002.40,146.53 1006.40,146.39 C1010.27,146.25 1014.13,146.12 1018.00,145.99" stroke="#e41a1c" stroke-width="1.0" fill="none"/>
<path d="M334.40,548.95 C338.40,544.44 342.40,539.93 346.40,535.55 C350.40,531.18 354.40,526.93 358.40,522.95 C362.40,518.97 366.40,515.28 370.40,511.76 C374.40,508.25 378.40,504.91 382.40,501.62 C386.40,498.33 390.40,495.07 394.40,491.82 C398.40,488.58 402.40,485.35 406.40,482.15 C410.40,478.94 414.40,475.75 418.40,472.58 C422.40,469.41 426.40,466.25 430.40,463.11 C434.40,459.97 438.40,456.84 442.40,453.73 C446.40,450.61 450.40,447.51 454.40,444.42 C458.40,441.33 462.40,438.25 466.40,435.18 C470.40,432.10 474.40,429.04 478.40,425.97 C482.40,422.91 486.40,419.85 490.40,416.79 C494.40,413.74 498.40,410.68 502.40,407.62 C506.40,404.56 510.40,401.50 514.40,398.45 C518.40,395.40 522.40,392.36 526.40,389.33 C530.40,386.30 534.40,383.29 538.40,380.30 C542.40,377.31 546.40,374.35 550.40,371.41 C554.40,368.48 558.40,365.58 562.40,362.71 C566.40,359.84 570.40,357.01 574.40,354.22 C578.40,351.43 582.40,348.67 586.40,345.96 C590.40,343.24 594.40,340.55 598.40,337.91 C602.40,335.26 606.40,332.65 610.40,330.07 C614.40,327.50 618.40,324.96 622.40,322.45 C626.40,319.95 630.40,317.48 634.40,315.04 C638.40,312.59 642.40,310.17 646.40,307.76 C650.40,305.34 654.40,302.93 658.40,300.49 C662.40,298.06 666.40,295.61 670.40,293.12 C674.40,290.63 678.40,288.10 682.40,285.52 C686.40,282.93 690.40,280.29 694.40,277.57 C698.40,274.84 702.40,272.04 706.40,269.14 C710.40,266.24 714.40,263.24 718.40,260.13 C722.40,257.01 726.40,253.80 730.40,250.53 C734.40,247.26 738.40,243.92 742.40,240.56 C746.40,237.20 750.40,233.82 754.40,230.45 C758.40,227.08 762.40,223.73 766.40,220.42 C770.40,217.12 774.40,213.87 778.40,210.71 C782.40,207.54 786.40,204.47 790.40,201.53 C794.40,198.60 798.40,195.80 802.40,193.19 C806.40,190.58 810.40,188.17 814.40,185.97 C818.40,183.78 822.40,181.79 826.40,179.98 C830.40,178.16 834.40,176.51 838.40,174.99 C842.40,173.47 846.40,172.08 850.40,170.80 C854.40,169.53 858.40,168.36 862.40,167.30 C866.40,166.24 870.40,165.29 874.40,164.42 C878.40,163.55 882.40,162.78 886.40,162.08 C890.40,161.39 894.40,160.77 898.40,160.22 C902.40,159.67 906.40,159.19 910.40,158.76 C914.40,158.33 918.40,157.95 922.40,157.62 C926.40,157.29 930.40,157.00 934.40,156.74 C938.40,156.48 942.40,156.25 946.40,156.03 C950.40,155.82 954.40,155.62 958.40,155.43 C962.40,155.23 966.40,155.04 970.40,154.86 C974.40,154.67 978.40,154.48 982.40,154.30 C986.40,154.12 990.40,153.94 994.40,153.75 C998.40,153.57 1002.40,153.39 1006.40,153.22 C1010.27,153.04 1014.13,152.87 1018.00,152.70" stroke="#377eb8" stroke-width="1.0" fill="none"/>
<path d="M334.40,553.95 C338.40,549.52 342.40,545.09 346.40,540.80 C350.40,536.51 354.40,532.35 358.40,528.45 C362.40,524.56 366.40,520.96 370.40,517.53 C374.40,514.10 378.40,510.84 382.40,507.62 C386.40,504.39 390.40,501.18 394.40,497.98 C398.40,494.77 402.40,491.58 406.40,488.40 C410.40,485.22 414.40,482.06 418.40,478.92 C422.40,475.77 426.40,472.65 430.40,469.55 C434.40,466.45 438.40,463.38 442.40,460.34 C446.40,457.29 450.40,454.28 454.40,451.30 C458.40,448.31 462.40,445.35 466.40,442.40 C470.40,439.45 474.40,436.51 478.40,433.58 C482.40,430.64 486.40,427.72 490.40,424.78 C494.40,421.84 498.40,418.90 502.40,415.94 C506.40,412.98 510.40,410.01 514.40,407.04 C518.40,404.06 522.40,401.09 526.40,398.12 C530.40,395.15 534.40,392.20 538.40,389.26 C542.40,386.32 546.40,383.40 550.40,380.51 C554.40,377.62 558.40,374.76 562.40,371.94 C566.40,369.12 570.40,366.34 574.40,363.60 C578.40,360.86 582.40,358.16 586.40,355.51 C590.40,352.85 594.40,350.23 598.40,347.66 C602.40,345.09 606.40,342.57 610.40,340.08 C614.40,337.60 618.40,335.16 622.40,332.78 C626.40,330.39 630.40,328.05 634.40,325.74 C638.40,323.44 642.40,321.16 646.40,318.88 C650.40,316.60 654.40,314.33 658.40,312.02 C662.40,309.71 666.40,307.36 670.40,304.96 C674.40,302.56 678.40,300.10 682.40,297.54 C686.40,294.98 690.40,292.34 694.40,289.57 C698.40,286.80 702.40,283.90 706.40,280.88 C710.40,277.87 714.40,274.76 718.40,271.59 C722.40,268.43 726.40,265.21 730.40,261.96 C734.40,258.70 738.40,255.41 742.40,252.10 C746.40,248.78 750.40,245.44 754.40,242.10 C758.40,238.76 762.40,235.42 766.40,232.08 C770.40,228.75 774.40,225.43 778.40,222.14 C782.40,218.84 786.40,215.57 790.40,212.42 C794.40,209.28 798.40,206.25 802.40,203.46 C806.40,200.67 810.40,198.13 814.40,195.88 C818.40,193.64 822.40,191.67 826.40,189.90 C830.40,188.13 834.40,186.55 838.40,185.10 C842.40,183.64 846.40,182.31 850.40,181.07 C854.40,179.84 858.40,178.70 862.40,177.67 C866.40,176.63 870.40,175.68 874.40,174.83 C878.40,173.97 882.40,173.20 886.40,172.50 C890.40,171.80 894.40,171.18 898.40,170.63 C902.40,170.07 906.40,169.59 910.40,169.15 C914.40,168.72 918.40,168.35 922.40,168.02 C926.40,167.68 930.40,167.40 934.40,167.14 C938.40,166.89 942.40,166.67 946.40,166.47 C950.40,166.27 954.40,166.09 958.40,165.93 C962.40,165.76 966.40,165.60 970.40,165.45 C974.40,165.30 978.40,165.16 982.40,165.02 C986.40,164.88 990.40,164.75 994.40,164.62 C998.40,164.49 1002.40,164.37 1006.40,164.25 C1010.27,164.13 1014.13,164.01 1018.00,163.89" stroke="#4daf4a" stroke-width="1.0" fill="none"/>
<path d="M334.40,561.94 C338.40,557.82 342.40,553.70 346.40,549.69 C350.40,545.68 354.40,541.77 358.40,538.09 C362.40,534.41 366.40,530.96 370.40,527.66 C374.40,524.36 378.40,521.19 382.40,518.04 C386.40,514.89 390.40,511.75 394.40,508.60 C398.40,505.46 402.40,502.31 406.40,499.18 C410.40,496.05 414.40,492.93 418.40,489.83 C422.40,486.73 426.40,483.65 430.40,480.59 C434.40,477.54 438.40,474.51 442.40,471.51 C446.40,468.52 450.40,465.56 454.40,462.64 C458.40,459.71 462.40,456.81 466.40,453.94 C470.40,451.06 474.40,448.20 478.40,445.35 C482.40,442.51 486.40,439.67 490.40,436.83 C494.40,434.00 498.40,431.16 502.40,428.32 C506.40,425.47 510.40,422.62 514.40,419.78 C518.40,416.93 522.40,414.09 526.40,411.26 C530.40,408.44 534.40,405.62 538.40,402.83 C542.40,400.04 546.40,397.28 550.40,394.54 C554.40,391.81 558.40,389.10 562.40,386.44 C566.40,383.78 570.40,381.16 574.40,378.58 C578.40,375.99 582.40,373.45 586.40,370.94 C590.40,368.44 594.40,365.97 598.40,363.53 C602.40,361.10 606.40,358.71 610.40,356.35 C614.40,353.99 618.40,351.66 622.40,349.38 C626.40,347.09 630.40,344.84 634.40,342.61 C638.40,340.38 642.40,338.17 646.40,335.96 C650.40,333.74 654.40,331.53 658.40,329.29 C662.40,327.05 666.40,324.78 670.40,322.46 C674.40,320.14 678.40,317.77 682.40,315.33 C686.40,312.89 690.40,310.37 694.40,307.76 C698.40,305.15 702.40,302.43 706.40,299.61 C710.40,296.80 714.40,293.88 718.40,290.88 C722.40,287.88 726.40,284.80 730.40,281.65 C734.40,278.50 738.40,275.29 742.40,272.02 C746.40,268.76 750.40,265.45 754.40,262.11 C758.40,258.76 762.40,255.38 766.40,251.99 C770.40,248.60 774.40,245.19 778.40,241.79 C782.40,238.38 786.40,234.96 790.40,231.66 C794.40,228.36 798.40,225.18 802.40,222.24 C806.40,219.31 810.40,216.63 814.40,214.30 C818.40,211.96 822.40,209.92 826.40,208.09 C830.40,206.27 834.40,204.66 838.40,203.19 C842.40,201.71 846.40,200.37 850.40,199.13 C854.40,197.89 858.40,196.76 862.40,195.72 C866.40,194.69 870.40,193.76 874.40,192.91 C878.40,192.06 882.40,191.29 886.40,190.59 C890.40,189.90 894.40,189.27 898.40,188.70 C902.40,188.14 906.40,187.63 910.40,187.17 C914.40,186.71 918.40,186.29 922.40,185.92 C926.40,185.55 930.40,185.22 934.40,184.92 C938.40,184.63 942.40,184.36 946.40,184.12 C950.40,183.88 954.40,183.66 958.40,183.46 C962.40,183.26 966.40,183.07 970.40,182.89 C974.40,182.72 978.40,182.56 982.40,182.40 C986.40,182.25 990.40,182.10 994.40,181.96 C998.40,181.82 1002.40,181.69 1006.40,181.56 C1010.27,181.43 1014.13,181.31 1018.00,181.19" stroke="#984ea3" stroke-width="1.0" fill="none"/>
<path d="M334.40,572.25 C338.40,568.31 342.40,564.37 346.40,560.50 C350.40,556.64 354.40,552.87 358.40,549.25 C362.40,545.64 366.40,542.21 370.40,538.90 C374.40,535.60 378.40,532.41 382.40,529.28 C386.40,526.15 390.40,523.06 394.40,520.01 C398.40,516.96 402.40,513.95 406.40,510.98 C410.40,508.00 414.40,505.05 418.40,502.14 C422.40,499.22 426.40,496.33 430.40,493.47 C434.40,490.60 438.40,487.76 442.40,484.94 C446.40,482.11 450.40,479.31 454.40,476.52 C458.40,473.73 462.40,470.95 466.40,468.18 C470.40,465.40 474.40,462.64 478.40,459.88 C482.40,457.11 486.40,454.35 490.40,451.58 C494.40,448.81 498.40,446.04 502.40,443.26 C506.40,440.48 510.40,437.69 514.40,434.90 C518.40,432.12 522.40,429.34 526.40,426.57 C530.40,423.81 534.40,421.06 538.40,418.34 C542.40,415.61 546.40,412.92 550.40,410.26 C554.40,407.60 558.40,404.98 562.40,402.41 C566.40,399.84 570.40,397.32 574.40,394.84 C578.40,392.36 582.40,389.92 586.40,387.52 C590.40,385.13 594.40,382.78 598.40,380.46 C602.40,378.14 606.40,375.87 610.40,373.63 C614.40,371.38 618.40,369.18 622.40,367.00 C626.40,364.83 630.40,362.69 634.40,360.58 C638.40,358.46 642.40,356.36 646.40,354.26 C650.40,352.16 654.40,350.05 658.40,347.92 C662.40,345.79 666.40,343.64 670.40,341.44 C674.40,339.24 678.40,337.00 682.40,334.69 C686.40,332.38 690.40,330.00 694.40,327.54 C698.40,325.07 702.40,322.51 706.40,319.87 C710.40,317.22 714.40,314.51 718.40,311.75 C722.40,309.00 726.40,306.18 730.40,303.27 C734.40,300.36 738.40,297.35 742.40,294.22 C746.40,291.09 750.40,287.84 754.40,284.52 C758.40,281.20 762.40,277.81 766.40,274.38 C770.40,270.96 774.40,267.50 778.40,264.05 C782.40,260.59 786.40,257.14 790.40,253.81 C794.40,250.47 798.40,247.26 802.40,244.28 C806.40,241.30 810.40,238.58 814.40,236.18 C818.40,233.77 822.40,231.65 826.40,229.73 C830.40,227.82 834.40,226.11 838.40,224.52 C842.40,222.94 846.40,221.47 850.40,220.10 C854.40,218.74 858.40,217.48 862.40,216.32 C866.40,215.17 870.40,214.11 874.40,213.14 C878.40,212.17 882.40,211.29 886.40,210.50 C890.40,209.71 894.40,209.00 898.40,208.37 C902.40,207.74 906.40,207.18 910.40,206.69 C914.40,206.20 918.40,205.77 922.40,205.40 C926.40,205.02 930.40,204.70 934.40,204.42 C938.40,204.14 942.40,203.90 946.40,203.69 C950.40,203.48 954.40,203.30 958.40,203.13 C962.40,202.96 966.40,202.81 970.40,202.67 C974.40,202.53 978.40,202.40 982.40,202.28 C986.40,202.17 990.40,202.06 994.40,201.95 C998.40,201.85 1002.40,201.75 1006.40,201.66 C1010.27,201.56 1014.13,201.48 1018.00,201.39" stroke="#ff7f00" stroke-width="1.0" fill="none"/>
<path d="M334.40,582.25 C338.40,578.49 342.40,574.73 346.40,571.03 C350.40,567.33 354.40,563.68 358.40,560.16 C362.40,556.64 366.40,553.24 370.40,549.95 C374.40,546.66 378.40,543.47 382.40,540.36 C386.40,537.25 390.40,534.21 394.40,531.24 C398.40,528.26 402.40,525.35 406.40,522.48 C410.40,519.62 414.40,516.80 418.40,514.01 C422.40,511.23 426.40,508.48 430.40,505.74 C434.40,503.01 438.40,500.30 442.40,497.60 C446.40,494.89 450.40,492.19 454.40,489.49 C458.40,486.80 462.40,484.11 466.40,481.42 C470.40,478.73 474.40,476.05 478.40,473.37 C482.40,470.70 486.40,468.03 490.40,465.36 C494.40,462.70 498.40,460.05 502.40,457.40 C506.40,454.75 510.40,452.11 514.40,449.48 C518.40,446.86 522.40,444.24 526.40,441.64 C530.40,439.05 534.40,436.46 538.40,433.90 C542.40,431.34 546.40,428.80 550.40,426.29 C554.40,423.77 558.40,421.28 562.40,418.81 C566.40,416.35 570.40,413.92 574.40,411.52 C578.40,409.12 582.40,406.75 586.40,404.42 C590.40,402.09 594.40,399.80 598.40,397.55 C602.40,395.31 606.40,393.10 610.40,390.95 C614.40,388.80 618.40,386.69 622.40,384.64 C626.40,382.59 630.40,380.59 634.40,378.64 C638.40,376.68 642.40,374.77 646.40,372.86 C650.40,370.95 654.40,369.04 658.40,367.12 C662.40,365.19 666.40,363.24 670.40,361.24 C674.40,359.24 678.40,357.18 682.40,355.05 C686.40,352.91 690.40,350.69 694.40,348.35 C698.40,346.02 702.40,343.56 706.40,341.00 C710.40,338.43 714.40,335.78 718.40,333.09 C722.40,330.39 726.40,327.63 730.40,324.78 C734.40,321.92 738.40,318.98 742.40,315.91 C746.40,312.84 750.40,309.66 754.40,306.44 C758.40,303.21 762.40,299.93 766.40,296.66 C770.40,293.39 774.40,290.12 778.40,286.91 C782.40,283.71 786.40,280.56 790.40,277.51 C794.40,274.46 798.40,271.50 802.40,268.65 C806.40,265.81 810.40,263.07 814.40,260.48 C818.40,257.89 822.40,255.43 826.40,253.14 C830.40,250.85 834.40,248.72 838.40,246.78 C842.40,244.83 846.40,243.09 850.40,241.51 C854.40,239.93 858.40,238.52 862.40,237.25 C866.40,235.98 870.40,234.85 874.40,233.84 C878.40,232.83 882.40,231.94 886.40,231.14 C890.40,230.34 894.40,229.62 898.40,228.98 C902.40,228.33 906.40,227.75 910.40,227.22 C914.40,226.69 918.40,226.22 922.40,225.79 C926.40,225.37 930.40,224.99 934.40,224.65 C938.40,224.32 942.40,224.02 946.40,223.76 C950.40,223.50 954.40,223.27 958.40,223.07 C962.40,222.87 966.40,222.70 970.40,222.54 C974.40,222.39 978.40,222.26 982.40,222.14 C986.40,222.02 990.40,221.92 994.40,221.83 C998.40,221.74 1002.40,221.66 1006.40,221.59 C1010.27,221.51 1014.13,221.45 1018.00,221.38" stroke="#e6c619" stroke-width="1.0" fill="none"/>
<path d="M334.40,590.59 C338.40,587.07 342.40,583.55 346.40,580.05 C350.40,576.56 354.40,573.09 358.40,569.67 C362.40,566.25 366.40,562.89 370.40,559.60 C374.40,556.32 378.40,553.11 382.40,550.00 C386.40,546.90 390.40,543.90 394.40,541.00 C398.40,538.09 402.40,535.28 406.40,532.53 C410.40,529.78 414.40,527.10 418.40,524.46 C422.40,521.82 426.40,519.23 430.40,516.65 C434.40,514.07 438.40,511.52 442.40,508.95 C446.40,506.39 450.40,503.82 454.40,501.25 C458.40,498.67 462.40,496.09 466.40,493.51 C470.40,490.92 474.40,488.33 478.40,485.74 C482.40,483.16 486.40,480.57 490.40,477.98 C494.40,475.40 498.40,472.82 502.40,470.24 C506.40,467.67 510.40,465.10 514.40,462.55 C518.40,460.00 522.40,457.46 526.40,454.93 C530.40,452.41 534.40,449.91 538.40,447.43 C542.40,444.95 546.40,442.50 550.40,440.08 C554.40,437.65 558.40,435.26 562.40,432.90 C566.40,430.55 570.40,428.23 574.40,425.94 C578.40,423.65 582.40,421.40 586.40,419.19 C590.40,416.97 594.40,414.79 598.40,412.65 C602.40,410.51 606.40,408.40 610.40,406.33 C614.40,404.27 618.40,402.23 622.40,400.24 C626.40,398.24 630.40,396.29 634.40,394.36 C638.40,392.43 642.40,390.53 646.40,388.64 C650.40,386.74 654.40,384.85 658.40,382.95 C662.40,381.05 666.40,379.14 670.40,377.19 C674.40,375.24 678.40,373.27 682.40,371.24 C686.40,369.21 690.40,367.13 694.40,364.99 C698.40,362.84 702.40,360.62 706.40,358.32 C710.40,356.01 714.40,353.61 718.40,351.11 C722.40,348.61 726.40,346.01 730.40,343.32 C734.40,340.63 738.40,337.84 742.40,334.96 C746.40,332.08 750.40,329.12 754.40,326.11 C758.40,323.10 762.40,320.04 766.40,316.97 C770.40,313.89 774.40,310.80 778.40,307.73 C782.40,304.67 786.40,301.62 790.40,298.62 C794.40,295.63 798.40,292.69 802.40,289.83 C806.40,286.98 810.40,284.21 814.40,281.56 C818.40,278.91 822.40,276.38 826.40,274.00 C830.40,271.62 834.40,269.39 838.40,267.35 C842.40,265.30 846.40,263.45 850.40,261.76 C854.40,260.08 858.40,258.56 862.40,257.18 C866.40,255.81 870.40,254.58 874.40,253.46 C878.40,252.35 882.40,251.36 886.40,250.46 C890.40,249.56 894.40,248.75 898.40,248.02 C902.40,247.29 906.40,246.62 910.40,246.01 C914.40,245.41 918.40,244.86 922.40,244.37 C926.40,243.88 930.40,243.44 934.40,243.05 C938.40,242.66 942.40,242.31 946.40,242.00 C950.40,241.70 954.40,241.43 958.40,241.19 C962.40,240.95 966.40,240.74 970.40,240.56 C974.40,240.38 978.40,240.22 982.40,240.08 C986.40,239.94 990.40,239.82 994.40,239.72 C998.40,239.61 1002.40,239.51 1006.40,239.42 C1010.27,239.34 1014.13,239.26 1018.00,239.17" stroke="#a65628" stroke-width="1.0" fill="none"/>
<path d="M334.40,595.63 C338.40,592.21 342.40,588.79 346.40,585.39 C350.40,581.98 354.40,578.60 358.40,575.25 C362.40,571.90 366.40,568.58 370.40,565.33 C374.40,562.09 378.40,558.91 382.40,555.85 C386.40,552.78 390.40,549.84 394.40,546.99 C398.40,544.15 402.40,541.40 406.40,538.73 C410.40,536.05 414.40,533.45 418.40,530.89 C422.40,528.34 426.40,525.83 430.40,523.33 C434.40,520.84 438.40,518.37 442.40,515.90 C446.40,513.42 450.40,510.93 454.40,508.43 C458.40,505.93 462.40,503.42 466.40,500.90 C470.40,498.38 474.40,495.85 478.40,493.32 C482.40,490.78 486.40,488.24 490.40,485.69 C494.40,483.14 498.40,480.58 502.40,478.03 C506.40,475.47 510.40,472.91 514.40,470.35 C518.40,467.80 522.40,465.26 526.40,462.74 C530.40,460.22 534.40,457.71 538.40,455.24 C542.40,452.77 546.40,450.33 550.40,447.93 C554.40,445.54 558.40,443.18 562.40,440.88 C566.40,438.58 570.40,436.32 574.40,434.12 C578.40,431.91 582.40,429.75 586.40,427.63 C590.40,425.51 594.40,423.44 598.40,421.39 C602.40,419.35 606.40,417.35 610.40,415.37 C614.40,413.40 618.40,411.46 622.40,409.55 C626.40,407.63 630.40,405.75 634.40,403.88 C638.40,402.01 642.40,400.16 646.40,398.30 C650.40,396.45 654.40,394.60 658.40,392.74 C662.40,390.87 666.40,389.00 670.40,387.09 C674.40,385.18 678.40,383.24 682.40,381.26 C686.40,379.28 690.40,377.26 694.40,375.18 C698.40,373.09 702.40,370.95 706.40,368.73 C710.40,366.52 714.40,364.22 718.40,361.84 C722.40,359.46 726.40,356.99 730.40,354.41 C734.40,351.84 738.40,349.15 742.40,346.34 C746.40,343.53 750.40,340.61 754.40,337.62 C758.40,334.64 762.40,331.60 766.40,328.55 C770.40,325.51 774.40,322.45 778.40,319.44 C782.40,316.43 786.40,313.46 790.40,310.57 C794.40,307.67 798.40,304.84 802.40,302.10 C806.40,299.36 810.40,296.71 814.40,294.17 C818.40,291.62 822.40,289.18 826.40,286.87 C830.40,284.56 834.40,282.38 838.40,280.34 C842.40,278.30 846.40,276.41 850.40,274.66 C854.40,272.91 858.40,271.29 862.40,269.81 C866.40,268.32 870.40,266.96 874.40,265.72 C878.40,264.47 882.40,263.34 886.40,262.32 C890.40,261.29 894.40,260.37 898.40,259.54 C902.40,258.71 906.40,257.97 910.40,257.31 C914.40,256.65 918.40,256.06 922.40,255.55 C926.40,255.03 930.40,254.58 934.40,254.17 C938.40,253.77 942.40,253.42 946.40,253.11 C950.40,252.79 954.40,252.52 958.40,252.26 C962.40,252.01 966.40,251.78 970.40,251.56 C974.40,251.35 978.40,251.15 982.40,250.97 C986.40,250.79 990.40,250.62 994.40,250.46 C998.40,250.30 1002.40,250.15 1006.40,250.00 C1010.27,249.86 1014.13,249.72 1018.00,249.58" stroke="#f781bf" stroke-width="1.0" fill="none"/>
<path d="M334.40,598.96 C338.40,595.60 342.40,592.23 346.40,588.88 C350.40,585.52 354.40,582.18 358.40,578.86 C362.40,575.53 366.40,572.23 370.40,568.98 C374.40,565.74 378.40,562.56 382.40,559.50 C386.40,556.44 390.40,553.50 394.40,550.68 C398.40,547.85 402.40,545.13 406.40,542.49 C410.40,539.84 414.40,537.28 418.40,534.76 C422.40,532.25 426.40,529.79 430.40,527.34 C434.40,524.90 438.40,522.48 442.40,520.06 C446.40,517.64 450.40,515.21 454.40,512.76 C458.40,510.32 462.40,507.87 466.40,505.40 C470.40,502.94 474.40,500.46 478.40,497.98 C482.40,495.49 486.40,492.99 490.40,490.48 C494.40,487.97 498.40,485.45 502.40,482.92 C506.40,480.39 510.40,477.85 514.40,475.32 C518.40,472.78 522.40,470.26 526.40,467.75 C530.40,465.24 534.40,462.76 538.40,460.31 C542.40,457.86 546.40,455.44 550.40,453.07 C554.40,450.71 558.40,448.39 562.40,446.13 C566.40,443.88 570.40,441.69 574.40,439.54 C578.40,437.40 582.40,435.31 586.40,433.26 C590.40,431.21 594.40,429.20 598.40,427.23 C602.40,425.26 606.40,423.32 610.40,421.41 C614.40,419.50 618.40,417.62 622.40,415.76 C626.40,413.89 630.40,412.05 634.40,410.21 C638.40,408.37 642.40,406.54 646.40,404.71 C650.40,402.88 654.40,401.04 658.40,399.18 C662.40,397.33 666.40,395.46 670.40,393.56 C674.40,391.66 678.40,389.73 682.40,387.76 C686.40,385.79 690.40,383.78 694.40,381.72 C698.40,379.65 702.40,377.53 706.40,375.35 C710.40,373.17 714.40,370.92 718.40,368.59 C722.40,366.27 726.40,363.86 730.40,361.36 C734.40,358.87 738.40,356.27 742.40,353.58 C746.40,350.88 750.40,348.09 754.40,345.24 C758.40,342.39 762.40,339.48 766.40,336.54 C770.40,333.61 774.40,330.66 778.40,327.72 C782.40,324.79 786.40,321.87 790.40,318.99 C794.40,316.12 798.40,313.29 802.40,310.53 C806.40,307.77 810.40,305.08 814.40,302.49 C818.40,299.89 822.40,297.40 826.40,295.02 C830.40,292.65 834.40,290.40 838.40,288.29 C842.40,286.19 846.40,284.23 850.40,282.42 C854.40,280.61 858.40,278.94 862.40,277.41 C866.40,275.87 870.40,274.46 874.40,273.17 C878.40,271.88 882.40,270.70 886.40,269.64 C890.40,268.57 894.40,267.62 898.40,266.75 C902.40,265.89 906.40,265.12 910.40,264.43 C914.40,263.75 918.40,263.14 922.40,262.60 C926.40,262.06 930.40,261.59 934.40,261.17 C938.40,260.75 942.40,260.38 946.40,260.05 C950.40,259.72 954.40,259.43 958.40,259.16 C962.40,258.90 966.40,258.65 970.40,258.42 C974.40,258.20 978.40,257.99 982.40,257.79 C986.40,257.60 990.40,257.41 994.40,257.24 C998.40,257.06 1002.40,256.90 1006.40,256.74 C1010.27,256.58 1014.13,256.43 1018.00,256.28" stroke="#999999" stroke-width="1.0" fill="none"/>
<line x1="1049.2" y1="123.9" x2="1062" y2="123.9" stroke="#e41a1c" stroke-width="1.5"/><circle cx="1055.5" cy="123.9" r="2.2" fill="#fff" stroke="#e41a1c" stroke-width="1.3"/>
<text x="1066" y="127.9" font-family="Liberation Sans" font-size="12" fill="#333">97th</text>
<line x1="1049.2" y1="142.0" x2="1062" y2="142.0" stroke="#377eb8" stroke-width="1.5"/><circle cx="1055.5" cy="142.0" r="2.2" fill="#fff" stroke="#377eb8" stroke-width="1.3"/>
<text x="1066" y="146.0" font-family="Liberation Sans" font-size="12" fill="#333">95th</text>
<line x1="1049.2" y1="160.10000000000002" x2="1062" y2="160.10000000000002" stroke="#4daf4a" stroke-width="1.5"/><circle cx="1055.5" cy="160.10000000000002" r="2.2" fill="#fff" stroke="#4daf4a" stroke-width="1.3"/>
<text x="1066" y="164.10000000000002" font-family="Liberation Sans" font-size="12" fill="#333">90th</text>
<line x1="1049.2" y1="178.20000000000002" x2="1062" y2="178.20000000000002" stroke="#984ea3" stroke-width="1.5"/><circle cx="1055.5" cy="178.20000000000002" r="2.2" fill="#fff" stroke="#984ea3" stroke-width="1.3"/>
<text x="1066" y="182.20000000000002" font-family="Liberation Sans" font-size="12" fill="#333">75th</text>
<line x1="1049.2" y1="196.3" x2="1062" y2="196.3" stroke="#ff7f00" stroke-width="1.5"/><circle cx="1055.5" cy="196.3" r="2.2" fill="#fff" stroke="#ff7f00" stroke-width="1.3"/>
<text x="1066" y="200.3" font-family="Liberation Sans" font-size="12" fill="#333">50th</text>
<line x1="1049.2" y1="214.4" x2="1062" y2="214.4" stroke="#e6c619" stroke-width="1.5"/><circle cx="1055.5" cy="214.4" r="2.2" fill="#fff" stroke="#e6c619" stroke-width="1.3"/>
<text x="1066" y="218.4" font-family="Liberation Sans" font-size="12" fill="#333">25th</text>
<line x1="1049.2" y1="232.5" x2="1062" y2="232.5" stroke="#a65628" stroke-width="1.5"/><circle cx="1055.5" cy="232.5" r="2.2" fill="#fff" stroke="#a65628" stroke-width="1.3"/>
<text x="1066" y="236.5" font-family="Liberation Sans" font-size="12" fill="#333">10th</text>
<line x1="1049.2" y1="250.60000000000002" x2="1062" y2="250.60000000000002" stroke="#f781bf" stroke-width="1.5"/><circle cx="1055.5" cy="250.60000000000002" r="2.2" fill="#fff" stroke="#f781bf" stroke-width="1.3"/>
<text x="1066" y="254.60000000000002" font-family="Liberation Sans" font-size="12" fill="#333">5th</text>
<line x1="1049.2" y1="268.70000000000005" x2="1062" y2="268.70000000000005" stroke="#999999" stroke-width="1.5"/><circle cx="1055.5" cy="268.70000000000005" r="2.2" fill="#fff" stroke="#999999" stroke-width="1.3"/>
<text x="1066" y="272.70000000000005" font-family="Liberation Sans" font-size="12" fill="#333">3rd</text>
<circle cx="627" cy="313.3" r="2.6" fill="#e41a1c"/>
<circle cx="627" cy="319.6" r="2.6" fill="#377eb8"/>
<circle cx="627" cy="330.0" r="2.6" fill="#4daf4a"/>
<circle cx="627" cy="346.7" r="2.6" fill="#984ea3"/>
<circle cx="627" cy="364.5" r="2.6" fill="#ff7f00"/>
<circle cx="627" cy="382.3" r="2.6" fill="#e6c619"/>
<circle cx="627" cy="375" r="5" fill="#2196c4"/>
<text x="629" y="364.3" text-anchor="middle" font-family="Liberation Sans" font-size="11.5" fill="#111">53 in</text>
</svg>
<div class="r" style="left:636.5px;top:385.3px;width:97.3px;height:187.4px;background:rgba(255,255,255,0.97);border:1px solid #d9d9d9;border-radius:4px;"></div>
<div class="t " style="left:703.3px;transform:translateX(-100%);top:392.2px;font-size:12px;color:#37474f;font-weight:bold;">9.7 yrs</div>
<div class="r" style="left:642.0px;top:416.3px;width:8.0px;height:2.2px;background:#e41a1c;"></div>
<div class="t " style="left:654.8px;top:410.6px;font-size:12px;color:#37474f;">97th</div>
<div class="t " style="left:688.2px;top:410.6px;font-size:12px;color:#37474f;">58.9 in</div>
<div class="r" style="left:642.0px;top:434.1px;width:8.0px;height:2.2px;background:#377eb8;"></div>
<div class="t " style="left:654.8px;top:428.4px;font-size:12px;color:#37474f;">95th</div>
<div class="t " style="left:688.2px;top:428.4px;font-size:12px;color:#37474f;">58.3 in</div>
<div class="r" style="left:642.0px;top:451.9px;width:8.0px;height:2.2px;background:#4daf4a;"></div>
<div class="t " style="left:654.8px;top:446.2px;font-size:12px;color:#37474f;">90th</div>
<div class="t " style="left:688.2px;top:446.2px;font-size:12px;color:#37474f;">57.3 in</div>
<div class="r" style="left:642.0px;top:469.7px;width:8.0px;height:2.2px;background:#984ea3;"></div>
<div class="t " style="left:654.8px;top:464.0px;font-size:12px;color:#37474f;">75th</div>
<div class="t " style="left:688.2px;top:464.0px;font-size:12px;color:#37474f;">55.7 in</div>
<div class="r" style="left:642.0px;top:487.5px;width:8.0px;height:2.2px;background:#ff7f00;"></div>
<div class="t " style="left:654.8px;top:481.8px;font-size:12px;color:#37474f;">50th</div>
<div class="t " style="left:688.2px;top:481.8px;font-size:12px;color:#37474f;">54.0 in</div>
<div class="r" style="left:642.0px;top:505.3px;width:8.0px;height:2.2px;background:#e6c619;"></div>
<div class="t " style="left:654.8px;top:499.6px;font-size:12px;color:#37474f;">25th</div>
<div class="t " style="left:688.2px;top:499.6px;font-size:12px;color:#37474f;">52.3 in</div>
<div class="r" style="left:642.0px;top:523.1px;width:8.0px;height:2.2px;background:#a65628;"></div>
<div class="t " style="left:654.8px;top:517.4px;font-size:12px;color:#37474f;">10th</div>
<div class="t " style="left:688.2px;top:517.4px;font-size:12px;color:#37474f;">50.8 in</div>
<div class="r" style="left:642.0px;top:540.9px;width:8.0px;height:2.2px;background:#f781bf;"></div>
<div class="t " style="left:654.8px;top:535.2px;font-size:12px;color:#37474f;">5th</div>
<div class="t " style="left:688.2px;top:535.2px;font-size:12px;color:#37474f;">49.9 in</div>
<div class="r" style="left:642.0px;top:558.7px;width:8.0px;height:2.2px;background:#999999;"></div>
<div class="t " style="left:654.8px;top:553.0px;font-size:12px;color:#37474f;">3rd</div>
<div class="t " style="left:688.2px;top:553.0px;font-size:12px;color:#37474f;">49.3 in</div>
<div class="r" style="left:596.4px;top:387.5px;width:97.4px;height:60.8px;background:#fff;border:1px solid #d0d0d0;border-radius:4.5px;"></div>
<div class="t " style="left:602.5px;top:395.2px;font-size:12px;color:#37474f;font-weight:bold;">53 in</div>
<div class="t " style="left:602.5px;top:412.0px;font-size:12px;color:#37474f;font-weight:bold;">35th percentile</div>
<div class="t " style="left:602.5px;top:428.4px;font-size:12px;color:#37474f;">09/15/2025</div>
<div class="t " style="left:575.3px;top:733.9px;font-size:12px;color:#263238;font-weight:bold;">Date</div>
<div class="t " style="left:575.3px;top:750.2px;font-size:12px;color:#263238;">09/15/2025</div>
<div class="t " style="left:645.3px;top:733.9px;font-size:12px;color:#263238;font-weight:bold;">Age</div>
<div class="t " style="left:645.3px;top:750.2px;font-size:12px;color:#263238;">9.7 yrs</div>
<div class="t " style="left:690.3px;top:733.9px;font-size:12px;color:#263238;font-weight:bold;">Height</div>
<div class="t " style="left:690.3px;top:750.2px;font-size:12px;color:#263238;">53 in</div>
<div class="t " style="left:737.7px;top:733.9px;font-size:12px;color:#263238;font-weight:bold;">Percentile</div>
<div class="t " style="left:737.7px;top:750.2px;font-size:12px;color:#263238;">35th</div>
<svg class="r" style="left:0;top:0" width="1441" height="789"><path d="M806,376.6 L1177,385.6" stroke="#fd6f47" stroke-width="5.2"/><polygon points="782.4,374.8 807.4,362.6 807.4,387.9" fill="#fd6f47"/></svg>
<div class="r" style="left:0.0px;top:0.0px;width:1441.0px;height:1.0px;background:#e2e2e2;"></div>
<div class="r" style="left:0.0px;top:0.0px;width:1.0px;height:789.0px;background:#e2e2e2;"></div>
</body></html>
